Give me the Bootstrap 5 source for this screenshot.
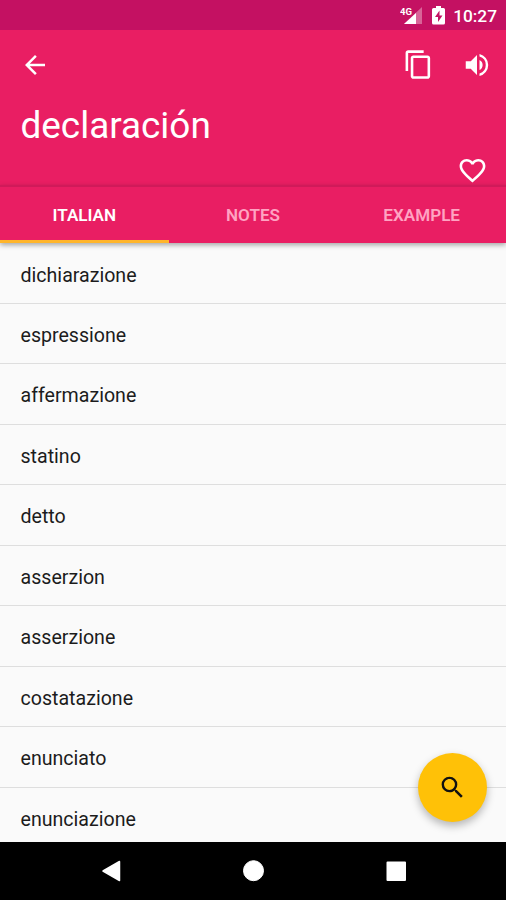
<!DOCTYPE html>
<html lang="es">
<head>
<meta charset="utf-8">
<meta name="viewport" content="width=device-width, initial-scale=1">
<title>declaración</title>
<link href="https://cdn.jsdelivr.net/npm/bootstrap@5.3.0/dist/css/bootstrap.min.css" rel="stylesheet">
<style>
body{font-family:Roboto,"Liberation Sans",sans-serif;background:#fafafa;color:#1c1c1c}
svg{display:block;flex:none}
.screen{height:900px}
.status{height:30px;background:#c41162;padding:1px 9px 0 0;font-size:17.3px;font-weight:500;line-height:28px}
.net{margin-right:9px}.batt{margin-right:8px}
.hero{height:155px;background:#e91e63;padding:19px 13px 0 20px}
.hero h1{font-size:36.9px;line-height:46px;margin:23px 0 0 .5px;font-weight:400}
.tools{height:31px}
.volume{margin:0 1px 0 28px}
.fav{margin:5.5px 5px 0 0}
.tabs{height:58px;background:#e91e63;border-top:2px solid #d01a5a;box-shadow:0 2px 5px rgba(0,0,0,.35);z-index:1}
.tabs .nav-link{color:#ffa3c2;font-size:17.1px;font-weight:600;line-height:24px;padding:16px 0 13px;border-radius:0;border-bottom:3px solid transparent}
.tabs .nav-link.active{color:#fff;border-color:#ffb52b}
.words .list-group-item{height:60.45px;padding:4px 20.5px 0;background:#fafafa;color:#1c1c1c;border-color:#dedede;border-width:0 0 1.5px;font-size:19.6px}
.words{padding-top:.6px}
.find{width:69px;height:69px;right:19px;top:753px;background:#ffc107;box-shadow:0 4px 8px rgba(0,0,0,.28);z-index:2}
.keys{height:58px;background:#000;z-index:3}
</style>
</head>
<body>
<div class="screen position-relative d-flex flex-column overflow-hidden">
  <div class="status d-flex justify-content-end align-items-center text-white flex-shrink-0">
    <svg class="net" width="23" height="20" viewBox="0 0 23 20"><path d="M22 1v17H4z" fill="#fff" opacity=".35"/><path d="M16 7v11H4z" fill="#fff"/><text x="0" y="8.500" font-size="9.500" font-weight="700" fill="#fff" textLength="12">4G</text></svg>
    <svg class="batt" width="13" height="20" viewBox="0 0 13 20"><path d="M4 0h5v2h2.500Q13 2 13 3.500V17q0 1.500-1.500 1.500h-10Q0 18.500 0 17V3.500Q0 2 1.500 2H4z" fill="#fff"/><path d="M7.500 4.500 3 11h3v5l4.500-6.500h-3z" fill="#c41162"/></svg>
    <span class="clock">10:27</span>
  </div>
  <header class="hero text-white flex-shrink-0">
    <div class="tools d-flex align-items-center">
      <svg width="30" height="30" viewBox="0 0 24 24" fill="#fff"><path d="M20 11H7.830l5.590-5.590L12 4l-8 8 8 8 1.410-1.410L7.830 13H20z"/></svg>
      <svg class="ms-auto" width="31" height="31" viewBox="0 0 24 24" fill="#fff"><path d="M16 1H4c-1.100 0-2 .9-2 2v14h2V3h12zm3 4H8c-1.100 0-2 .9-2 2v14c0 1.100.9 2 2 2h11c1.100 0 2-.9 2-2V7c0-1.100-.9-2-2-2m0 16H8V7h11z"/></svg>
      <svg class="volume" width="30" height="30" viewBox="0 0 24 24" fill="#fff"><path d="M3 9v6h4l5 5V4L7 9zm13.500 3A4.500 4.500 0 0 0 14 7.970v8.050A4.500 4.500 0 0 0 16.500 12M14 3.230v2.060a7 7 0 0 1 0 13.420v2.060a9 9 0 0 0 0-17.540"/></svg>
    </div>
    <h1>declaración</h1>
    <div class="fav d-flex justify-content-end"><svg width="31" height="31" viewBox="0 0 24 24" fill="#fff"><path d="M16.500 3c-1.740 0-3.410.81-4.500 2.090C10.910 3.810 9.240 3 7.500 3 4.420 3 2 5.420 2 8.500c0 3.780 3.400 6.860 8.550 11.540L12 21.350l1.450-1.320C18.600 15.360 22 12.280 22 8.500 22 5.420 19.580 3 16.500 3m-4.400 15.550-.1.1-.1-.1C7.140 14.240 4 11.390 4 8.500 4 6.500 5.500 5 7.500 5c1.540 0 3.040.99 3.570 2.360h1.870C13.460 5.990 14.960 5 16.500 5c2 0 3.500 1.500 3.500 3.500 0 2.890-3.140 5.740-7.900 10.050"/></svg></div>
  </header>
  <nav class="tabs nav nav-fill flex-nowrap position-relative flex-shrink-0">
    <a class="nav-link active w-100" href="#">ITALIAN</a>
    <a class="nav-link w-100" href="#">NOTES</a>
    <a class="nav-link w-100" href="#">EXAMPLE</a>
  </nav>
  <main class="words flex-grow-1 overflow-hidden">
    <ul class="list-group list-group-flush">
      <li class="list-group-item d-flex align-items-center">dichiarazione</li>
      <li class="list-group-item d-flex align-items-center">espressione</li>
      <li class="list-group-item d-flex align-items-center">affermazione</li>
      <li class="list-group-item d-flex align-items-center">statino</li>
      <li class="list-group-item d-flex align-items-center">detto</li>
      <li class="list-group-item d-flex align-items-center">asserzion</li>
      <li class="list-group-item d-flex align-items-center">asserzione</li>
      <li class="list-group-item d-flex align-items-center">costatazione</li>
      <li class="list-group-item d-flex align-items-center">enunciato</li>
      <li class="list-group-item d-flex align-items-center">enunciazione</li>
    </ul>
  </main>
  <button class="find btn border-0 rounded-circle position-absolute d-flex align-items-center justify-content-center p-0" type="button" aria-label="Buscar">
    <svg width="29" height="29" viewBox="0 0 24 24" fill="#111"><path d="M15.500 14h-.79l-.28-.27A6.470 6.470 0 0 0 16 9.500 6.500 6.500 0 1 0 9.500 16c1.610 0 3.090-.59 4.230-1.570l.27.28v.79l5 4.990L20.490 19zm-6 0C7.010 14 5 11.990 5 9.500S7.010 5 9.500 5 14 7.010 14 9.500 11.990 14 9.500 14"/></svg>
  </button>
  <footer class="keys flex-shrink-0">
    <svg width="506" height="58" viewBox="0 0 506 58" fill="#fff" stroke="#fff" stroke-linejoin="round"><path d="M103 29l16.500-9.500v19z" stroke-width="1.500"/><circle cx="253.500" cy="28.700" r="10" stroke-width="1"/><rect x="387.500" y="20.500" width="17.500" height="17.500" stroke-width="2"/></svg>
  </footer>
</div>
<script src="https://cdn.jsdelivr.net/npm/bootstrap@5.3.0/dist/js/bootstrap.bundle.min.js"></script>
</body>
</html>
